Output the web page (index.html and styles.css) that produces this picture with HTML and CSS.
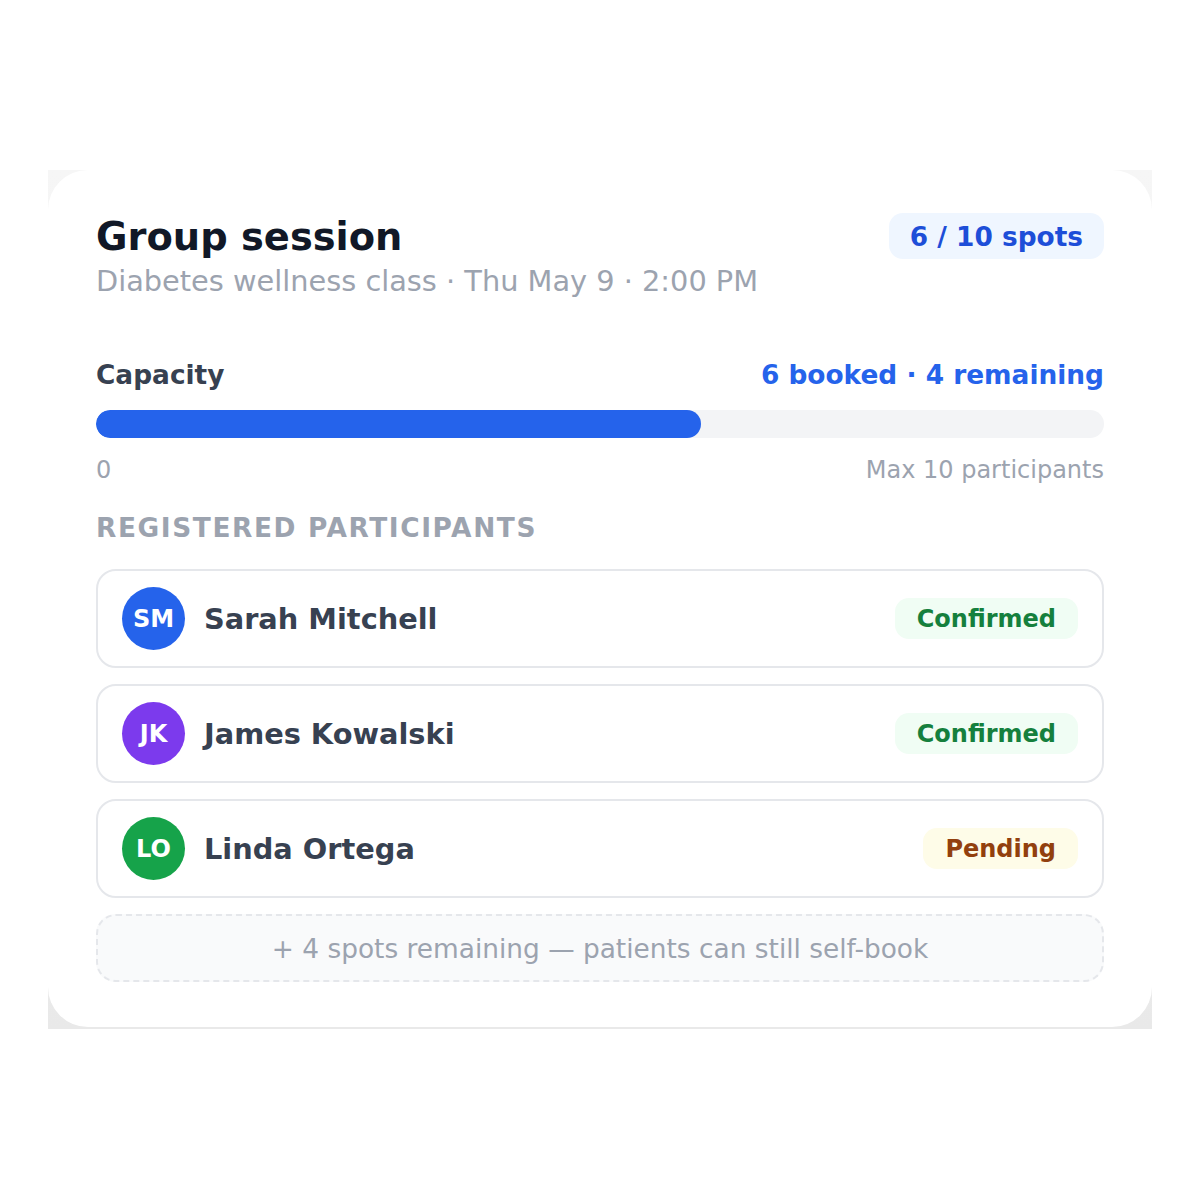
FILE: index.html
```html
<!DOCTYPE html>
<html lang="en">
<head>
<meta charset="utf-8">
<title>Group session</title>
<link rel="stylesheet" href="styles.css">
</head>
<body>
<div class="frame">
  <div class="card">
    <div class="header">
      <div class="heading">
        <h1 class="title">Group session</h1>
        <div class="subtitle">Diabetes wellness class · Thu May 9 · 2:00 PM</div>
      </div>
      <div class="spots">6 / 10 spots</div>
    </div>

    <div class="cap-row">
      <span class="cap-label">Capacity</span>
      <span class="cap-stat">6 booked · 4 remaining</span>
    </div>
    <div class="bar"><div class="bar-fill" style="width: 60%"></div></div>
    <div class="scale">
      <span>0</span>
      <span>Max 10 participants</span>
    </div>

    <div class="section">Registered participants</div>

    <div class="list">
      <div class="row">
        <div class="avatar av-blue">SM</div>
        <div class="name">Sarah Mitchell</div>
        <div class="status confirmed">Confirmed</div>
      </div>
      <div class="row">
        <div class="avatar av-purple">JK</div>
        <div class="name">James Kowalski</div>
        <div class="status confirmed">Confirmed</div>
      </div>
      <div class="row">
        <div class="avatar av-green">LO</div>
        <div class="name">Linda Ortega</div>
        <div class="status pending">Pending</div>
      </div>
      <div class="more">+ 4 spots remaining — patients can still self-book</div>
    </div>
  </div>
</div>
</body>
</html>
```

FILE: styles.css
```css
* { box-sizing: border-box; }

html, body {
  margin: 0;
  padding: 0;
  background: #ffffff;
  font-family: "DejaVu Sans", "Noto Sans", sans-serif;
}

.frame {
  width: 1104px;
  margin: 170px auto 0;
  background: linear-gradient(#f6f6f6, #e9e9e9);
  overflow: hidden;
}

.card {
  background: #ffffff;
  border-radius: 40px;
  margin-bottom: 2px;
  padding: 44px 48px 45px;
}

.header {
  display: flex;
  justify-content: space-between;
  align-items: flex-start;
  margin-bottom: 60px;
}

.title {
  margin: 0;
  font-size: 38.4px;
  line-height: 46px;
  font-weight: 700;
  color: #111827;
}

.subtitle {
  margin-top: 3px;
  font-size: 28.8px;
  line-height: 36px;
  color: #9ca3af;
}

.spots {
  margin-top: -1px;
  height: 46px;
  padding: 0 21px;
  display: flex;
  align-items: center;
  background: #eff6ff;
  color: #1d4ed8;
  border-radius: 14px;
  font-size: 26.4px;
  font-weight: 700;
}

.cap-row {
  display: flex;
  justify-content: space-between;
  font-size: 26.4px;
  line-height: 32px;
  font-weight: 700;
}

.cap-label { color: #374151; }
.cap-stat { color: #2563eb; }

.bar {
  margin-top: 19px;
  height: 28px;
  border-radius: 14px;
  background: #f3f4f6;
  overflow: hidden;
}

.bar-fill {
  height: 100%;
  background: #2563eb;
  border-radius: 14px;
}

.scale {
  margin-top: 17px;
  display: flex;
  justify-content: space-between;
  font-size: 24px;
  line-height: 30px;
  color: #9ca3af;
}

.section {
  margin-top: 27px;
  font-size: 26.4px;
  line-height: 32px;
  font-weight: 700;
  letter-spacing: 1.6px;
  text-transform: uppercase;
  color: #9ca3af;
}

.list {
  margin-top: 25px;
  display: flex;
  flex-direction: column;
  gap: 16px;
}

.row {
  display: flex;
  align-items: center;
  height: 99px;
  padding: 0 24px;
  border: 2px solid #e5e7eb;
  border-radius: 20px;
}

.avatar {
  width: 63px;
  height: 63px;
  border-radius: 50%;
  flex: none;
  display: flex;
  align-items: center;
  justify-content: center;
  color: #ffffff;
  font-size: 24px;
  font-weight: 700;
}

.av-blue { background: #2563eb; }
.av-purple { background: #7c3aed; }
.av-green { background: #16a34a; }

.name {
  margin-left: 19px;
  flex: 1;
  font-size: 28.8px;
  font-weight: 700;
  color: #374151;
}

.status {
  height: 41px;
  padding: 0 22px;
  display: flex;
  align-items: center;
  border-radius: 14px;
  font-size: 24px;
  font-weight: 700;
}

.confirmed { background: #f0fdf4; color: #15803d; }
.pending { background: #fefce8; color: #92400e; }

.more {
  height: 68px;
  display: flex;
  align-items: center;
  justify-content: center;
  border: 2px dashed #e5e7eb;
  border-radius: 20px;
  background: #f9fafb;
  font-size: 26.4px;
  color: #9ca3af;
}
```
